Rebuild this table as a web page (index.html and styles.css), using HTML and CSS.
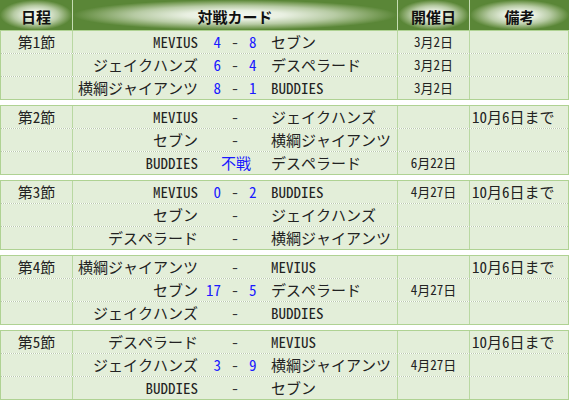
FILE: index.html
```html
<!DOCTYPE html>
<html lang="ja">
<head>
<meta charset="utf-8">
<title>日程</title>
<link rel="stylesheet" href="styles.css">
</head>
<body>
<div class="schedule">
  <div class="block">
    <div class="head">
      <div class="hcell">日程</div>
      <div class="hcell">対戦カード</div>
      <div class="hcell">開催日</div>
      <div class="hcell">備考</div>
    </div>
    <div class="group">
      <div class="row">
        <div class="cell sec">第1節</div>
        <div class="cell home">MEVIUS</div>
        <div class="cell s1">4</div>
        <div class="cell dash">-</div>
        <div class="cell s2">8</div>
        <div class="cell away">セブン</div>
        <div class="cell day">3月2日</div>
        <div class="cell note"></div>
      </div>
      <div class="row">
        <div class="cell sec"></div>
        <div class="cell home">ジェイクハンズ</div>
        <div class="cell s1">6</div>
        <div class="cell dash">-</div>
        <div class="cell s2">4</div>
        <div class="cell away">デスペラード</div>
        <div class="cell day">3月2日</div>
        <div class="cell note"></div>
      </div>
      <div class="row">
        <div class="cell sec"></div>
        <div class="cell home">横綱ジャイアンツ</div>
        <div class="cell s1">8</div>
        <div class="cell dash">-</div>
        <div class="cell s2">1</div>
        <div class="cell away">BUDDIES</div>
        <div class="cell day">3月2日</div>
        <div class="cell note"></div>
      </div>
    </div>
  </div>

  <div class="group">
    <div class="row">
      <div class="cell sec">第2節</div>
      <div class="cell home">MEVIUS</div>
      <div class="cell s1"></div>
      <div class="cell dash">-</div>
      <div class="cell s2"></div>
      <div class="cell away">ジェイクハンズ</div>
      <div class="cell day"></div>
      <div class="cell note">10月6日まで</div>
    </div>
    <div class="row">
      <div class="cell sec"></div>
      <div class="cell home">セブン</div>
      <div class="cell s1"></div>
      <div class="cell dash">-</div>
      <div class="cell s2"></div>
      <div class="cell away">横綱ジャイアンツ</div>
      <div class="cell day"></div>
      <div class="cell note"></div>
    </div>
    <div class="row">
      <div class="cell sec"></div>
      <div class="cell home">BUDDIES</div>
      <div class="cell forfeit">不戦</div>
      <div class="cell away">デスペラード</div>
      <div class="cell day">6月22日</div>
      <div class="cell note"></div>
    </div>
  </div>

  <div class="group">
    <div class="row">
      <div class="cell sec">第3節</div>
      <div class="cell home">MEVIUS</div>
      <div class="cell s1">0</div>
      <div class="cell dash">-</div>
      <div class="cell s2">2</div>
      <div class="cell away">BUDDIES</div>
      <div class="cell day">4月27日</div>
      <div class="cell note">10月6日まで</div>
    </div>
    <div class="row">
      <div class="cell sec"></div>
      <div class="cell home">セブン</div>
      <div class="cell s1"></div>
      <div class="cell dash">-</div>
      <div class="cell s2"></div>
      <div class="cell away">ジェイクハンズ</div>
      <div class="cell day"></div>
      <div class="cell note"></div>
    </div>
    <div class="row">
      <div class="cell sec"></div>
      <div class="cell home">デスペラード</div>
      <div class="cell s1"></div>
      <div class="cell dash">-</div>
      <div class="cell s2"></div>
      <div class="cell away">横綱ジャイアンツ</div>
      <div class="cell day"></div>
      <div class="cell note"></div>
    </div>
  </div>

  <div class="group">
    <div class="row">
      <div class="cell sec">第4節</div>
      <div class="cell home">横綱ジャイアンツ</div>
      <div class="cell s1"></div>
      <div class="cell dash">-</div>
      <div class="cell s2"></div>
      <div class="cell away">MEVIUS</div>
      <div class="cell day"></div>
      <div class="cell note">10月6日まで</div>
    </div>
    <div class="row">
      <div class="cell sec"></div>
      <div class="cell home">セブン</div>
      <div class="cell s1">17</div>
      <div class="cell dash">-</div>
      <div class="cell s2">5</div>
      <div class="cell away">デスペラード</div>
      <div class="cell day">4月27日</div>
      <div class="cell note"></div>
    </div>
    <div class="row">
      <div class="cell sec"></div>
      <div class="cell home">ジェイクハンズ</div>
      <div class="cell s1"></div>
      <div class="cell dash">-</div>
      <div class="cell s2"></div>
      <div class="cell away">BUDDIES</div>
      <div class="cell day"></div>
      <div class="cell note"></div>
    </div>
  </div>

  <div class="group">
    <div class="row">
      <div class="cell sec">第5節</div>
      <div class="cell home">デスペラード</div>
      <div class="cell s1"></div>
      <div class="cell dash">-</div>
      <div class="cell s2"></div>
      <div class="cell away">MEVIUS</div>
      <div class="cell day"></div>
      <div class="cell note">10月6日まで</div>
    </div>
    <div class="row">
      <div class="cell sec"></div>
      <div class="cell home">ジェイクハンズ</div>
      <div class="cell s1">3</div>
      <div class="cell dash">-</div>
      <div class="cell s2">9</div>
      <div class="cell away">横綱ジャイアンツ</div>
      <div class="cell day">4月27日</div>
      <div class="cell note"></div>
    </div>
    <div class="row">
      <div class="cell sec"></div>
      <div class="cell home">BUDDIES</div>
      <div class="cell s1"></div>
      <div class="cell dash">-</div>
      <div class="cell s2"></div>
      <div class="cell away">セブン</div>
      <div class="cell day"></div>
      <div class="cell note"></div>
    </div>
  </div>
</div>
</body>
</html>
```

FILE: styles.css
```css
* {
  box-sizing: border-box;
}

body {
  margin: 0;
  background: #ffffff;
  font-family: "Noto Sans Mono CJK JP", "Noto Sans CJK JP", monospace;
  font-size: 15px;
  color: #222222;
}

.schedule {
  width: 569px;
  display: flex;
  flex-direction: column;
  gap: 5px;
}

.head {
  display: grid;
  grid-template-columns: 73px 325px 72px 99px;
  height: 30px;
}

.hcell {
  display: flex;
  align-items: center;
  justify-content: center;
  padding-top: 2px;
  font-weight: bold;
  font-size: 15px;
  color: #111111;
  border-right: 1px solid #c6dcb4;
  background: radial-gradient(closest-side, #f5f8f1 0%, #e9f0e2 30%, #b7cba4 62%, #80a261 85%, #5a8637 100%);
}

.hcell:last-child {
  border-right: none;
}

.group {
  border: 1px solid #afd293;
  background: #ffffff;
}

.row {
  display: grid;
  grid-template-columns: 72px 128px 20px 28px 22px 127px 72px 98px;
  height: 23px;
  line-height: 22px;
  background: #e3eed9;
  background-clip: padding-box;
  border-bottom: 1px dotted #bac9ae;
}

.row:last-child {
  height: 22px;
  border-bottom: none;
}

.cell {
  white-space: nowrap;
  overflow: hidden;
}

.sec {
  text-align: center;
  border-right: 1px solid #b9d8a2;
}

.home {
  text-align: right;
  padding-right: 3px;
}

.s1 {
  text-align: right;
  color: #1a1aff;
}

.dash {
  text-align: center;
  color: #333333;
}

.s2 {
  text-align: left;
  color: #1a1aff;
}

.forfeit {
  grid-column: span 3;
  text-align: center;
  color: #1a1aff;
}

.away {
  text-align: left;
  border-right: 1px solid #b9d8a2;
}

.day {
  text-align: center;
  font-size: 13px;
  border-right: 1px solid #b9d8a2;
}

.note {
  text-align: left;
  padding-left: 2px;
}
```
